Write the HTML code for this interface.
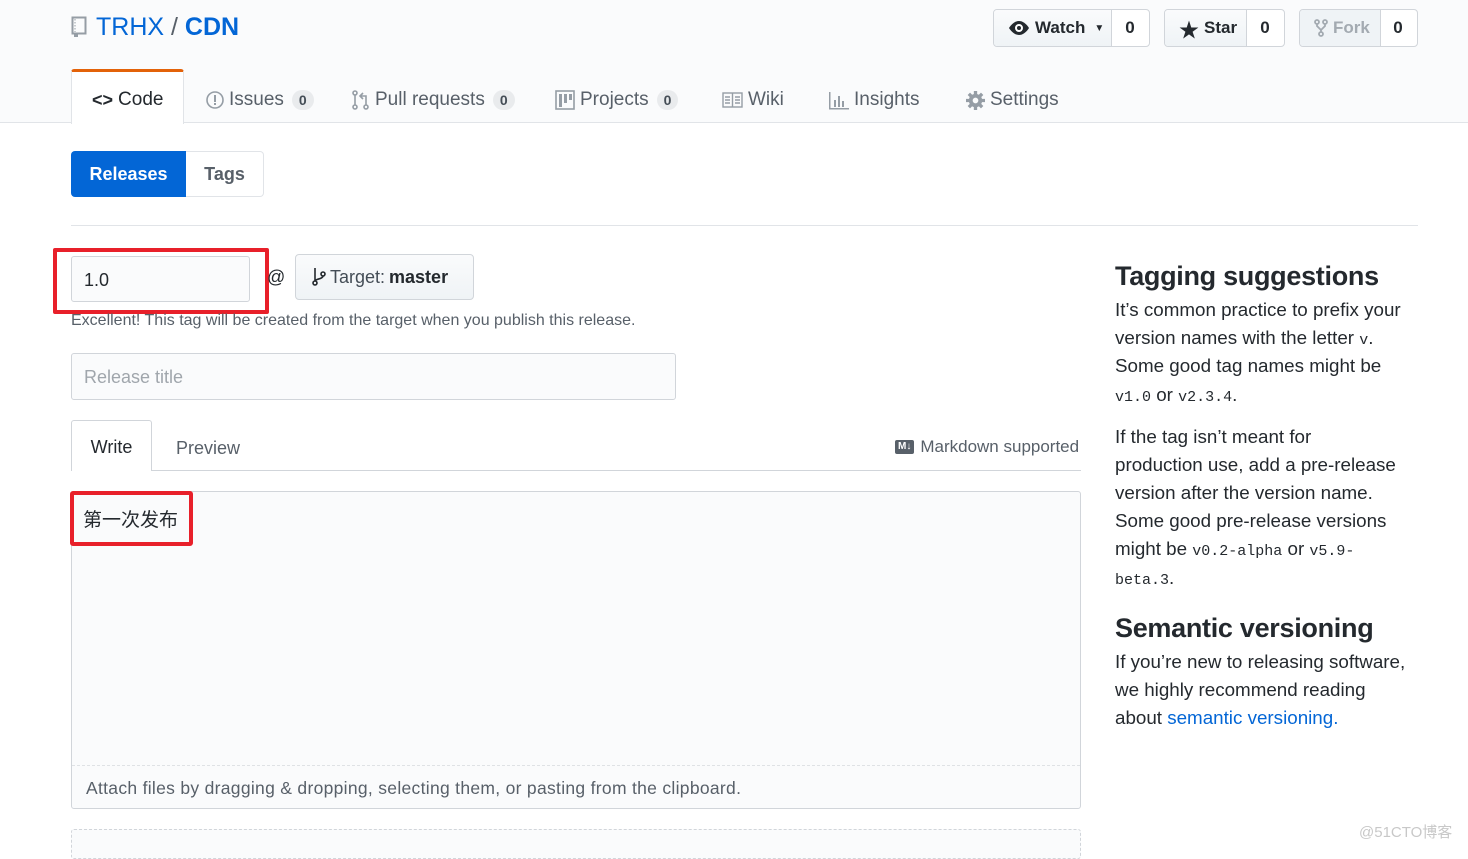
<!DOCTYPE html>
<html><head><meta charset="utf-8">
<style>
*{box-sizing:border-box;margin:0;padding:0}
body{width:1468px;height:849px;overflow:hidden;background:#fff;font-family:"Liberation Sans","Noto Sans CJK SC",sans-serif;color:#24292e;position:relative}
.a{position:absolute;white-space:nowrap}
.hdr{position:absolute;left:0;top:0;width:1468px;height:123px;background:#fafbfc;border-bottom:1px solid #e1e4e8}
.btn{position:absolute;top:9px;height:38px;border:1px solid #d1d5da;border-radius:4px;background:#fff;overflow:hidden;font-size:17px}
.btn .l{position:absolute;left:0;top:0;bottom:0;background:linear-gradient(#fafbfc,#eff3f6);border-right:1px solid #d1d5da;display:flex;align-items:center;padding-left:14px;gap:5px;font-weight:bold;color:#24292e}
.btn .n{position:absolute;right:0;top:0;bottom:0;display:flex;align-items:center;justify-content:center;font-weight:bold}
.tab{position:absolute;top:89px;font-size:19px;color:#586069;display:flex;align-items:center;gap:5px}
.cnt{display:inline-block;background:#e9ebed;border-radius:12px;font-size:14px;font-weight:bold;color:#444d56;padding:2px 7px;margin-left:3px}
.sb{position:absolute;left:1115px;font-size:18.8px;color:#24292e;white-space:nowrap}
code{font-family:"Liberation Mono",monospace;font-size:15px}
</style></head><body>
<div class="hdr"></div>
<svg class="a" style="left:71px;top:16px" width="16" height="22" viewBox="0 0 16 22"><rect x="1.5" y="1.5" width="13" height="16" fill="none" stroke="#959da5" stroke-width="2"/><line x1="4" y1="3" x2="4" y2="16" stroke="#959da5" stroke-dasharray="1.5 1.5"/><rect x="3" y="17" width="4" height="4" fill="#959da5"/></svg>
<div class="a" style="left:96px;top:13px;font-size:25px;color:#0366d6">TRHX <span style="color:#586069">/</span> <b>CDN</b></div>

<div class="btn" style="left:993px;width:157px"><div class="l" style="width:118px"><svg width="22" height="16" viewBox="0 0 22 16"><path d="M11 1C5 1 1 8 1 8s4 7 10 7 10-7 10-7-4-7-10-7z" fill="#24292e"/><circle cx="11" cy="8" r="4" fill="#fff"/><circle cx="11" cy="8" r="2" fill="#24292e"/></svg>Watch<span style="font-size:10px;margin-left:4px">▼</span></div><div class="n" style="width:38px">0</div></div>
<div class="btn" style="left:1164px;width:121px"><div class="l" style="width:82px"><span style="font-size:20px">★</span>Star</div><div class="n" style="width:38px">0</div></div>
<div class="btn" style="left:1299px;width:119px"><div class="l" style="width:81px;color:#a3aab1;background:#eff3f6"><svg width="14" height="18" viewBox="0 0 14 18"><g fill="none" stroke="#a3aab1" stroke-width="1.8"><circle cx="3" cy="3" r="2"/><circle cx="11" cy="3" r="2"/><circle cx="7" cy="15" r="2"/><path d="M3 5v2l4 4 4-4V5M7 11v2"/></g></svg>Fork</div><div class="n" style="width:38px">0</div></div>

<div class="a" style="left:71px;top:69px;width:113px;height:55px;background:#fff;border:1px solid #e1e4e8;border-top:3px solid #e36209;border-bottom:none;border-radius:3px 3px 0 0"></div>
<div class="tab" style="left:92px;color:#24292e"><b style="font-size:18px">&lt;&gt;</b>Code</div>
<div class="tab" style="left:206px"><svg width="18" height="18"><circle cx="9" cy="9" r="8" fill="none" stroke="#959da5" stroke-width="1.6"/><rect x="8" y="4" width="2" height="7" fill="#959da5"/><rect x="8" y="12" width="2" height="2" fill="#959da5"/></svg>Issues<span class="cnt">0</span></div>
<div class="tab" style="left:352px"><svg width="18" height="20"><g fill="none" stroke="#959da5" stroke-width="1.6"><circle cx="3" cy="3" r="2"/><circle cx="3" cy="17" r="2"/><circle cx="14" cy="17" r="2"/><path d="M3 5v10M14 15V6H9M11 3L8 6l3 3"/></g></svg>Pull requests<span class="cnt">0</span></div>
<div class="tab" style="left:555px"><svg width="20" height="20"><rect x="1" y="1" width="18" height="18" fill="none" stroke="#959da5" stroke-width="1.6"/><rect x="4" y="4" width="3" height="13" fill="#959da5"/><rect x="9" y="4" width="3" height="9" fill="#959da5"/><rect x="14" y="4" width="3" height="6" fill="#959da5"/></svg>Projects<span class="cnt">0</span></div>
<div class="tab" style="left:722px"><svg width="21" height="16"><g fill="none" stroke="#959da5" stroke-width="1.4"><rect x="1" y="1" width="19" height="14"/><path d="M10.5 1v14M3 5h5M3 8h5M3 11h5M13 5h5M13 8h5M13 11h5"/></g></svg>Wiki</div>
<div class="tab" style="left:829px"><svg width="20" height="20"><g fill="#959da5"><rect x="0" y="18" width="20" height="1.5"/><rect x="0" y="2" width="1.5" height="17"/><rect x="5" y="10" width="2" height="7"/><rect x="9" y="6" width="2" height="11"/><rect x="13" y="11" width="2" height="6"/></g></svg>Insights</div>
<div class="tab" style="left:966px"><svg width="19" height="19" viewBox="0 0 20 20"><circle cx="10" cy="10" r="7" fill="#959da5"/><g stroke="#959da5" stroke-width="3.5"><path d="M10 0v20M0 10h20M3 3l14 14M17 3L3 17"/></g><circle cx="10" cy="10" r="3" fill="#fafbfc"/></svg>Settings</div>

<div class="a" style="left:71px;top:151px;width:115px;height:46px;background:#0366d6;border-radius:4px 0 0 4px;color:#fff;font-weight:bold;font-size:18px;display:flex;align-items:center;justify-content:center">Releases</div>
<div class="a" style="left:186px;top:151px;width:78px;height:46px;border:1px solid #e1e4e8;border-left:none;border-radius:0 4px 4px 0;color:#586069;font-weight:bold;font-size:18px;display:flex;align-items:center;justify-content:center">Tags</div>
<div class="a" style="left:71px;top:225px;width:1347px;height:1px;background:#e1e4e8"></div>

<div class="a" style="left:71px;top:256px;width:179px;height:46px;background:#fafbfc;border:1px solid #d1d5da;border-radius:3px;font-size:18px;padding:13px 12px">1.0</div>
<div class="a" style="left:53px;top:248px;width:216px;height:66px;border:4px solid #e8202a;border-radius:2px"></div>
<div class="a" style="left:267px;top:267px;font-size:18px">@</div>
<div class="a" style="left:295px;top:254px;width:179px;height:46px;border:1px solid #d1d5da;border-radius:4px;background:linear-gradient(#fafbfc,#eff3f6);font-size:18px;display:flex;align-items:center;padding-left:16px;gap:4px;color:#444d56"><svg width="14" height="20"><g fill="none" stroke="#24292e" stroke-width="1.6"><circle cx="3" cy="16" r="2"/><circle cx="11" cy="7" r="2"/><path d="M3 1v13M11 9c0 3-8 3-8 5"/></g></svg>Target: <b style="color:#24292e">master</b></div>
<div class="a" style="left:71px;top:312px;font-size:16px;color:#586069">Excellent! This tag will be created from the target when you publish this release.</div>

<div class="a" style="left:71px;top:353px;width:605px;height:47px;background:#fafbfc;border:1px solid #d1d5da;border-radius:3px;font-size:18px;color:#a0a6ac;padding:13px 12px">Release title</div>

<div class="a" style="left:71px;top:470px;width:1010px;height:1px;background:#d1d5da"></div>
<div class="a" style="left:71px;top:420px;width:81px;height:51px;background:#fff;border:1px solid #d1d5da;border-bottom:none;border-radius:3px 3px 0 0;font-size:18px;display:flex;align-items:center;justify-content:center;padding-top:3px">Write</div>
<div class="a" style="left:176px;top:438px;font-size:18px;color:#586069">Preview</div>
<div class="a" style="left:895px;top:437px;font-size:17px;color:#586069;display:flex;align-items:center;gap:6px"><span style="display:inline-block;background:#586069;color:#fff;font-size:10px;font-weight:bold;padding:1px 3px;border-radius:2px;line-height:12px">M↓</span>Markdown supported</div>

<div class="a" style="left:71px;top:491px;width:1010px;height:318px;background:#fafbfc;border:1px solid #d1d5da;border-radius:3px"></div>
<div class="a" style="left:72px;top:765px;width:1008px;height:1px;border-top:1px dashed #dfe2e5"></div>
<div class="a" style="left:86px;top:778px;font-size:17.5px;color:#586069;letter-spacing:0.3px">Attach files by dragging &amp; dropping, selecting them, or pasting from the clipboard.</div>
<div class="a" style="left:70px;top:491px;width:123px;height:55px;border:4px solid #e8202a;border-radius:3px"></div>
<div class="a" style="left:83px;top:505px;font-size:19px;font-family:'Noto Sans CJK SC',sans-serif">第一次发布</div>
<div class="a" style="left:71px;top:829px;width:1010px;height:30px;background:#fafbfc;border:1px dashed #d1d5da;border-radius:3px"></div>

<div class="sb" style="top:261px;font-size:27px;font-weight:bold;letter-spacing:-0.3px">Tagging suggestions</div>
<div class="sb" style="top:299px">It’s common practice to prefix your</div>
<div class="sb" style="top:327px">version names with the letter <code>v</code>.</div>
<div class="sb" style="top:355px">Some good tag names might be</div>
<div class="sb" style="top:384px"><code>v1.0</code> or <code>v2.3.4</code>.</div>
<div class="sb" style="top:426px">If the tag isn’t meant for</div>
<div class="sb" style="top:454px">production use, add a pre-release</div>
<div class="sb" style="top:482px">version after the version name.</div>
<div class="sb" style="top:510px">Some good pre-release versions</div>
<div class="sb" style="top:538px">might be <code>v0.2-alpha</code> or <code>v5.9-</code></div>
<div class="sb" style="top:567px"><code>beta.3</code>.</div>
<div class="sb" style="top:613px;font-size:27px;font-weight:bold;letter-spacing:-0.3px">Semantic versioning</div>
<div class="sb" style="top:651px">If you’re new to releasing software,</div>
<div class="sb" style="top:679px">we highly recommend reading</div>
<div class="sb" style="top:707px">about <span style="color:#0366d6">semantic versioning.</span></div>
<div class="a" style="left:1359px;top:821px;font-size:15px;color:#c8c8c8">@51CTO博客</div>
</body></html>
